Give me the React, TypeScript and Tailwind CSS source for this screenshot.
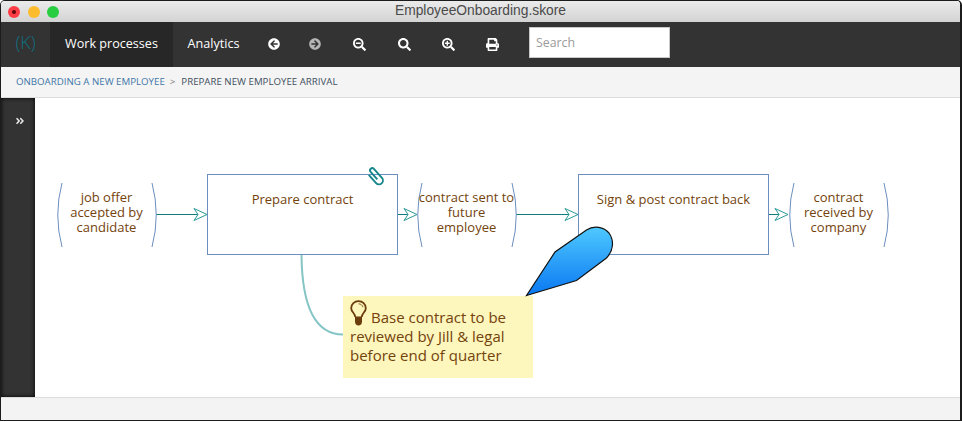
import type { ReactNode } from "react"
import { FaArrowCircleLeft, FaArrowCircleRight, FaSearchMinus, FaSearch, FaSearchPlus, FaPrint, FaAngleDoubleRight } from "react-icons/fa"

const openSans = { fontFamily: "'Open Sans', sans-serif" }

function Bracket({ side }: { side: "left" | "right" }) {
  return (
    <svg width="6" height="66" viewBox="0 0 6 66" fill="none" className="shrink-0">
      <path
        d={side === "left" ? "M5 1 Q-3.5 33 5 65" : "M1 1 Q9.5 33 1 65"}
        stroke="#6c8ebf"
        strokeWidth="1"
      />
    </svg>
  )
}

function EventNode({ left, text }: { left: string; text: string }) {
  return (
    <div className={`absolute top-[84px] flex h-[66px] w-[100px] items-center justify-between ${left}`}>
      <Bracket side="left" />
      <div className="flex w-[88px] justify-center pr-[1px] pb-[6px]">
        <div className="text-center text-[13px] leading-[15px] whitespace-pre text-[#74430c]">{text}</div>
      </div>
      <Bracket side="right" />
    </div>
  )
}

function TaskNode({ left, label }: { left: string; label: string }) {
  return (
    <div className={`absolute top-[76px] h-[81px] w-[191px] border border-[#6c8ebf] bg-white pt-[15px] text-center text-[13px] leading-[18px] text-[#74430c] ${left}`}>
      {label}
    </div>
  )
}

function ToolIcon({ children, className }: { children: ReactNode; className: string }) {
  return <div className={`flex items-center justify-center ${className}`}>{children}</div>
}

function Arrow({ x1, x2 }: { x1: number; x2: number }) {
  const y = 116.5
  return (
    <g fill="none">
      <path d={`M${x1} ${y} H${x2 - 4}`} stroke="#137a7a" strokeWidth="1" />
      <path d={`M${x2} ${y} L${x2 - 13} ${y - 6} L${x2 - 9} ${y} L${x2 - 13} ${y + 6} Z`} stroke="#2a9a96" strokeWidth="1" fill="#fff" />
    </g>
  )
}

function Bulb() {
  return (
    <svg width="17" height="26" viewBox="0 0 17 26" fill="none" className="mr-[4px] inline-block align-[-3px]">
      <path d="M5.2 17 C5 13 1.2 12 1.2 8.2 C1.2 4 4.5 1.2 8.5 1.2 C12.5 1.2 15.8 4 15.8 8.2 C15.8 12 12 13 11.8 17" stroke="#6b3d0c" strokeWidth="1.8" />
      <path d="M5 16.5 H12 V21.5 C12 24 10.5 25.5 8.5 25.5 C6.5 25.5 5 24 5 21.5 Z" fill="#6b3d0c" />
      <path d="M8.5 3.8 C10.8 3.8 12.6 5.4 13 7.2" stroke="#6b3d0c" strokeWidth="0.8" />
    </svg>
  )
}

function Clip() {
  return (
    <svg width="18" height="20" viewBox="0 0 18 20" fill="none" className="absolute top-[68px] left-[331px] overflow-visible">
      <g transform="rotate(-42 9 10)" stroke="#16868a" strokeWidth="1.9">
        <path d="M8.5 14 V4 A2.2 2.2 0 0 1 12.9 4 V16 A3.9 3.9 0 0 1 5.1 16 V5" />
      </g>
    </svg>
  )
}

export default function App() {
  return (
    <div className="h-[422px] w-[962px] bg-white" style={openSans}>
      <div className="flex h-[421px] w-[962px] flex-col overflow-hidden rounded-t-[5px] border border-r-2 border-[#1c1c1c]">
        {/* Title bar */}
        <div className="relative flex h-[21px] shrink-0 items-center justify-center bg-gradient-to-b from-[#ebebeb] to-[#d3d3d3]">
          <div className="absolute left-[7px] flex items-center gap-[7.5px]">
            <span className="flex h-3 w-3 items-center justify-center rounded-full bg-[#fc3d45]">
              <span className="h-1 w-1 rounded-full bg-[#5a0a0a]" />
            </span>
            <span className="h-3 w-3 rounded-full bg-[#fdbc2e]" />
            <span className="h-3 w-3 rounded-full bg-[#29cd42]" />
          </div>
          <span className="text-[13.8px] text-[#4a4a4a]" style={{ fontFamily: "'Liberation Sans', sans-serif" }}>
            EmployeeOnboarding.skore
          </span>
        </div>

        {/* Toolbar */}
        <div className="flex h-[45px] shrink-0 items-center bg-[#333333] text-white">
          <div className="flex h-full w-[49px] items-center justify-center pb-[4px] text-[18px] font-light text-[#0f6f80]">(K)</div>
          <div className="flex h-full w-[123px] items-center justify-center bg-[#272727] text-[12.6px]">Work processes</div>
          <div className="flex h-full w-[81px] items-center justify-center text-[12.6px]">Analytics</div>
          <div className="flex items-center pb-[1px] text-[13px]">
            <ToolIcon className="w-[40px] text-[12px]"><FaArrowCircleLeft /></ToolIcon>
            <ToolIcon className="w-[41px] text-[12px] text-[#b5b5b5]"><FaArrowCircleRight /></ToolIcon>
            <ToolIcon className="w-[49px]"><FaSearchMinus /></ToolIcon>
            <ToolIcon className="w-[40px]"><FaSearch /></ToolIcon>
            <ToolIcon className="w-[48px]"><FaSearchPlus /></ToolIcon>
            <ToolIcon className="w-[40px]"><FaPrint /></ToolIcon>
          </div>
          <div className="mt-[5px] ml-[17px] flex h-[31px] w-[141px] items-center self-start border border-[#c8c8c8] bg-white px-[6px] pt-[2px] text-[12.3px] text-[#9a9a9a]">
            Search
          </div>
        </div>

        {/* Breadcrumb */}
        <div className="flex h-[31px] shrink-0 items-center border-b border-[#dddddd] bg-[#f4f4f4] pt-[1px] pl-[15px] text-[9.7px] font-normal whitespace-nowrap">
          <span className="text-[#3f76a8]">ONBOARDING A NEW EMPLOYEE</span>
          <span className="mr-[6px] ml-[5px] text-[#777]">&gt;</span>
          <span className="text-[#3f4f5e]">PREPARE NEW EMPLOYEE ARRIVAL</span>
        </div>

        {/* Main */}
        <div className="flex min-h-0 flex-1">
          <div className="flex w-[34px] shrink-0 justify-center bg-[#333333] pt-[18px] pl-[3px] text-[10px] text-[#e8e8e8] shadow-[inset_0_0_4px_#000]">
            <FaAngleDoubleRight />
          </div>
          <div className="relative flex-1 bg-white">
            <svg className="absolute inset-0" width="925" height="299" fill="none">
              <Arrow x1={121} x2={172} />
              <Arrow x1={363} x2={382} />
              <Arrow x1={481} x2={543} />
              <Arrow x1={734} x2={753} />
              <path d="M266.5 157 C267 205 278 236.5 308 236.5" stroke="#85c5c5" strokeWidth="2" />
            </svg>
            <EventNode left="left-[22px]" text={"job offer\naccepted by\ncandidate"} />
            <TaskNode left="left-[172px]" label="Prepare contract" />
            <EventNode left="left-[382px]" text={"contract sent to\nfuture\nemployee"} />
            <TaskNode left="left-[543px]" label="Sign & post contract back" />
            <EventNode left="left-[754px]" text={"contract\nreceived by\ncompany"} />
            <Clip />

            {/* Note */}
            <div className="absolute top-[198px] left-[308px] h-[82px] w-[190px] bg-[#fdf6bd] px-[7px] pt-[4px] text-[15px] leading-[19px] text-[#74430c]">
              <Bulb />
              Base contract to be reviewed by Jill &amp; legal before end of quarter
            </div>

            {/* Callout */}
            <svg className="absolute top-[126px] left-[489px]" width="90" height="76" viewBox="0 0 90 76" fill="none">
              <defs>
                <linearGradient id="callout" x1="0" y1="0" x2="0" y2="1">
                  <stop offset="0" stopColor="#4ec8ff" />
                  <stop offset="1" stopColor="#0a78f2" />
                </linearGradient>
              </defs>
              <path
                d="M2.5 71.5 L31 28 L62.5 6 C70 1 80 3 85 9 C90 16 90 26 82.5 34 L52.5 56.5 Z"
                fill="url(#callout)"
                stroke="#111111"
                strokeWidth="1.2"
              />
            </svg>
          </div>
        </div>

        {/* Footer */}
        <div className="h-[23px] shrink-0 border-t border-[#dcdcdc] bg-[#f3f3f3]" />
      </div>
    </div>
  )
}
